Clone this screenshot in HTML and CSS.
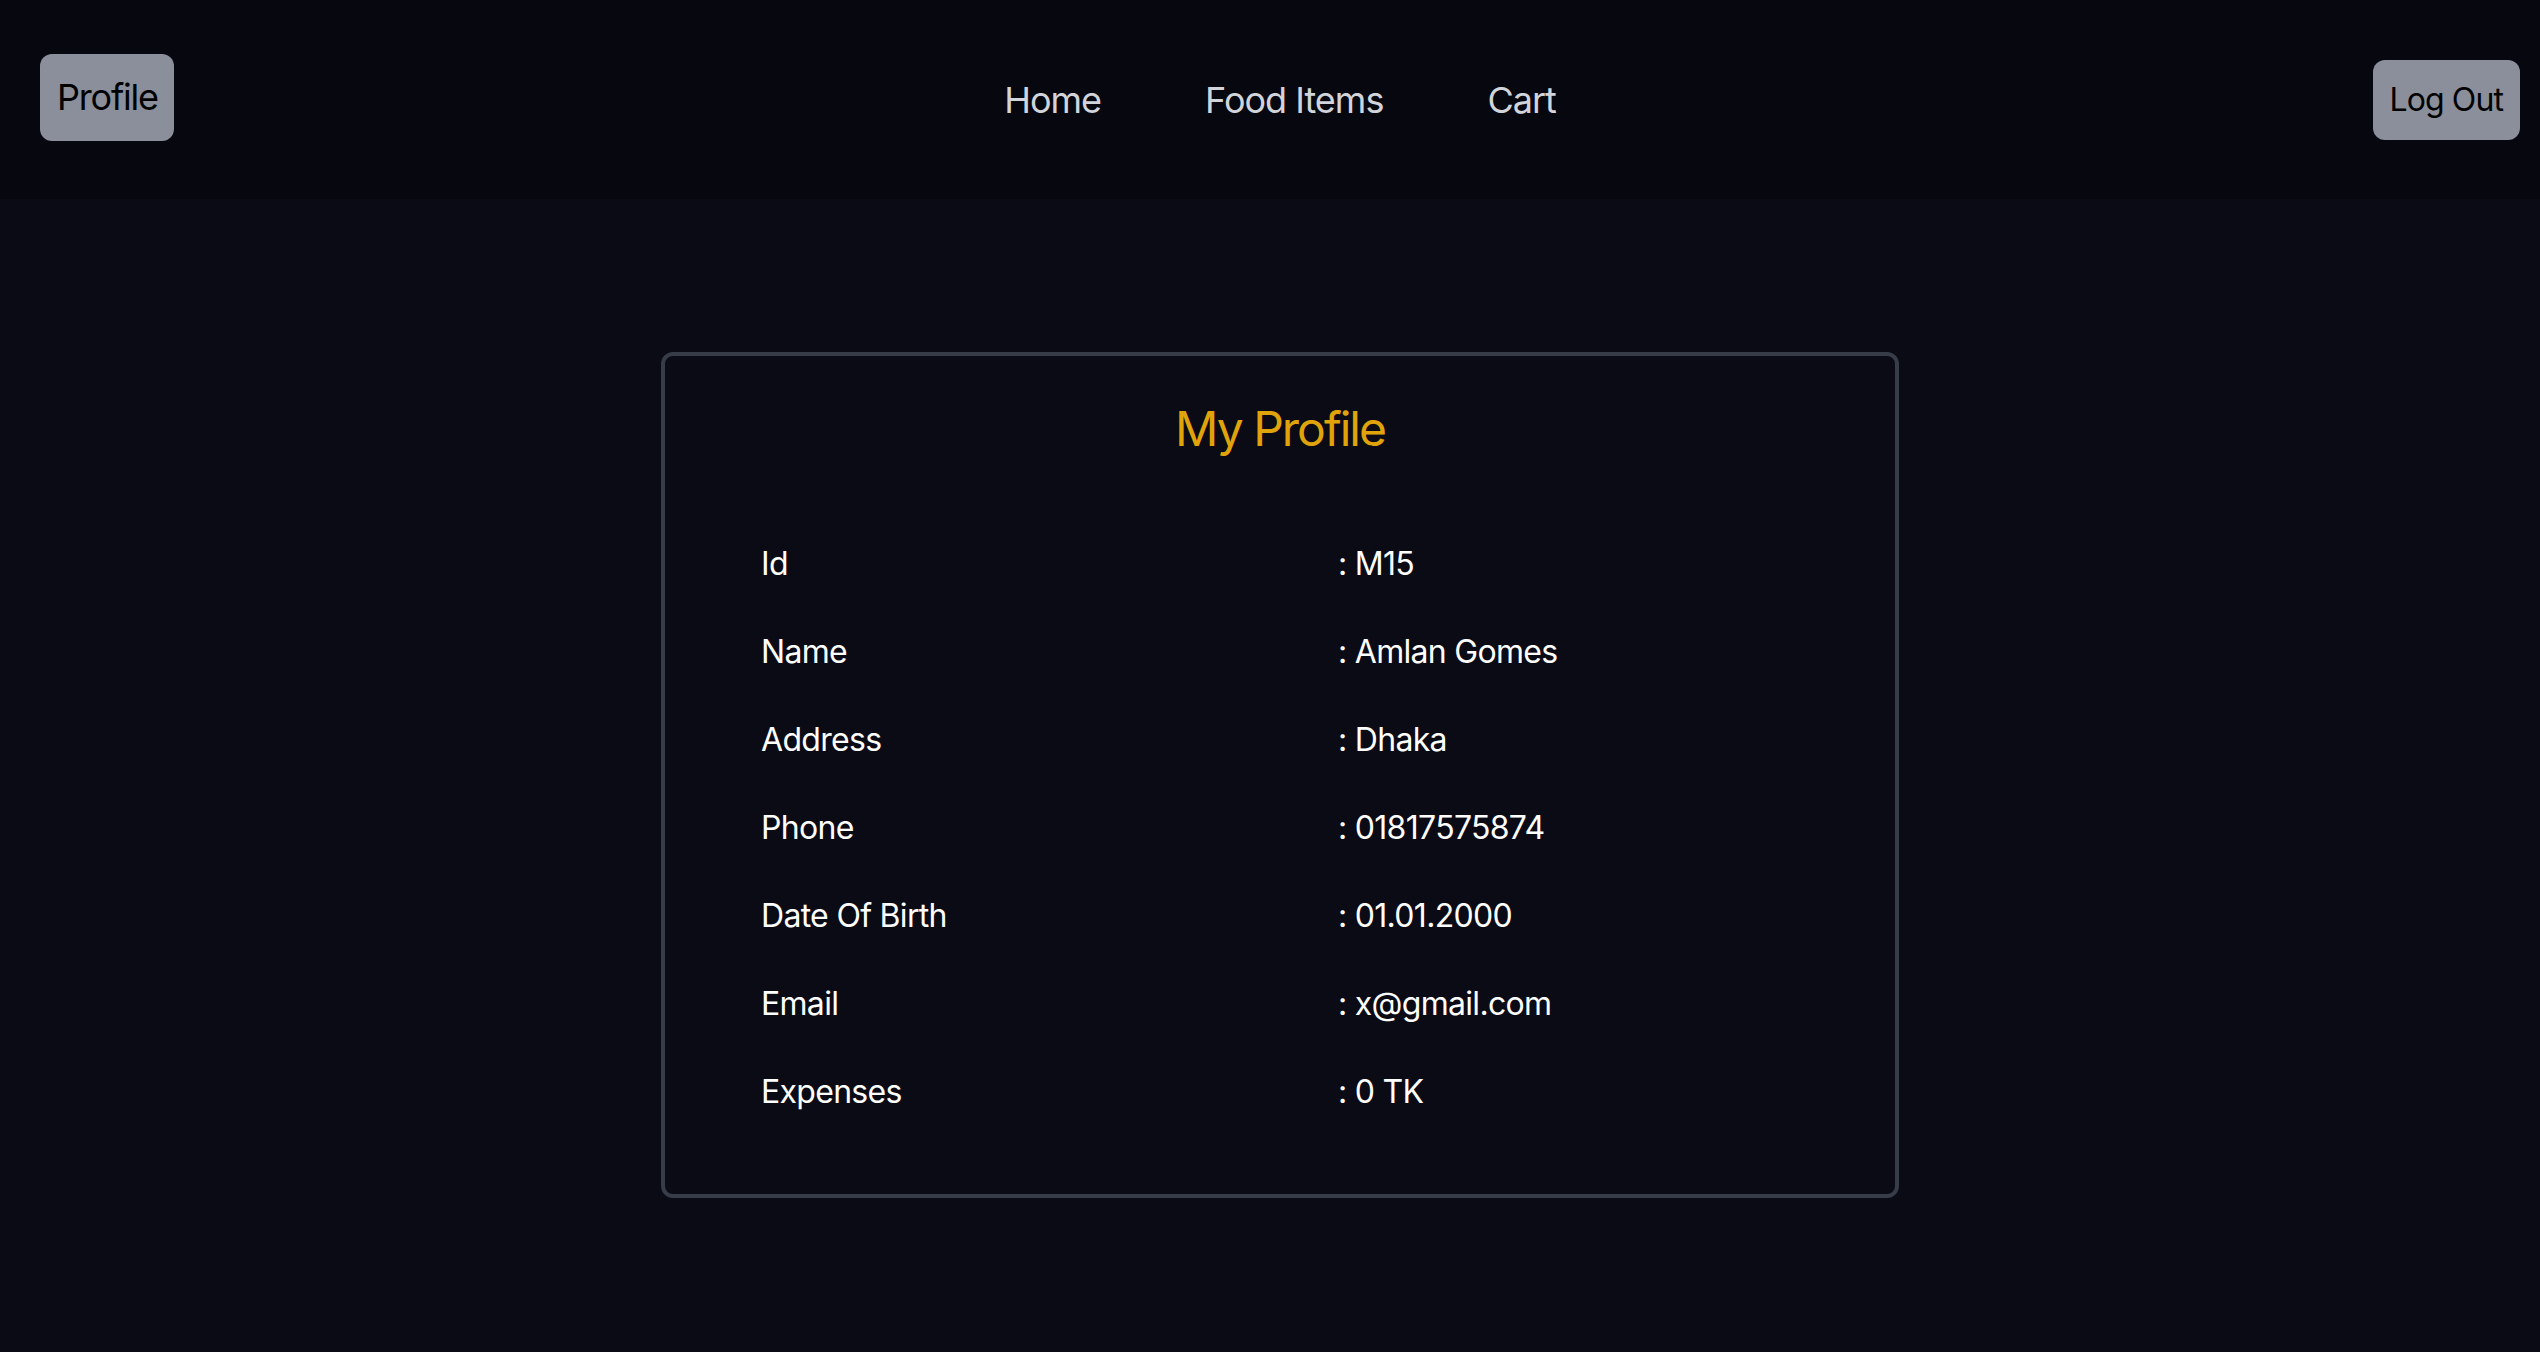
FILE: index.html
```html
<!DOCTYPE html>
<html lang="en">
<head>
<meta charset="utf-8">
<title>My Profile</title>
<link rel="stylesheet" href="styles.css">
</head>
<body>
<div class="page">
  <header class="topbar">
    <div class="left"><a class="btn btn-profile" href="#">Profile</a></div>
    <nav class="nav">
      <a href="#">Home</a>
      <a href="#">Food Items</a>
      <a href="#">Cart</a>
    </nav>
    <div class="right"><button class="btn btn-logout">Log Out</button></div>
  </header>
  <main class="main">
    <section class="card">
      <h1 class="title">My Profile</h1>
      <div class="rows">
        <div class="row"><span class="label">Id</span><span class="value">: M15</span></div>
        <div class="row"><span class="label">Name</span><span class="value">: Amlan Gomes</span></div>
        <div class="row"><span class="label">Address</span><span class="value">: Dhaka</span></div>
        <div class="row"><span class="label">Phone</span><span class="value">: 01817575874</span></div>
        <div class="row"><span class="label">Date Of Birth</span><span class="value">: 01.01.2000</span></div>
        <div class="row"><span class="label">Email</span><span class="value">: x@gmail.com</span></div>
        <div class="row"><span class="label">Expenses</span><span class="value">: 0 TK</span></div>
      </div>
    </section>
  </main>
</div>
</body>
</html>
```
FILE: styles.css
```css
html, body {
  margin: 0;
  padding: 0;
  background: #0a0b15;
  overflow: hidden;
}
body {
  font-family: Inter, "Noto Sans", "Liberation Sans", sans-serif;
  color: #ffffff;
}
.page {
  width: 2560px;
  height: 1352px;
  background: #0a0b15;
}
.topbar {
  height: 199px;
  background: #07070f;
  box-sizing: border-box;
  padding: 0 40px;
  display: grid;
  grid-template-columns: 1fr auto 1fr;
  align-items: center;
}
.left { justify-self: start; }
.right { justify-self: end; }
.btn {
  display: inline-block;
  background: #8a8f9b;
  color: #000;
  border: none;
  border-radius: 12px;
  text-decoration: none;
  font-family: inherit;
  cursor: pointer;
}
.btn-profile {
  font-size: 36px;
  line-height: 55px;
  letter-spacing: -1.2px;
  padding: 16px 16px 16px 17px;
  margin-top: -4px;
}
.btn-logout {
  font-size: 32px;
  line-height: 48px;
  letter-spacing: -0.9px;
  padding: 16px 17px;
}
.nav {
  display: flex;
  gap: 104px;
  align-items: center;
}
.nav a {
  color: #d1d5db;
  text-decoration: none;
  font-size: 36px;
  line-height: 54px;
  letter-spacing: -1px;
}
.main {
  display: flex;
  justify-content: center;
  padding-top: 153px;
}
.card {
  width: 1238px;
  box-sizing: border-box;
  border: 4px solid #363c48;
  border-radius: 12px;
  padding: 41px 96px 58px;
}
.title {
  margin: 0;
  text-align: center;
  font-size: 48px;
  line-height: 64px;
  font-weight: 400;
  letter-spacing: -2px;
  color: #e0a40a;
}
.rows {
  margin-top: 59px;
}
.row {
  display: grid;
  grid-template-columns: 577px 1fr;
  height: 88px;
  align-items: center;
  font-size: 32px;
  line-height: 48px;
  letter-spacing: -0.7px;
}
```
